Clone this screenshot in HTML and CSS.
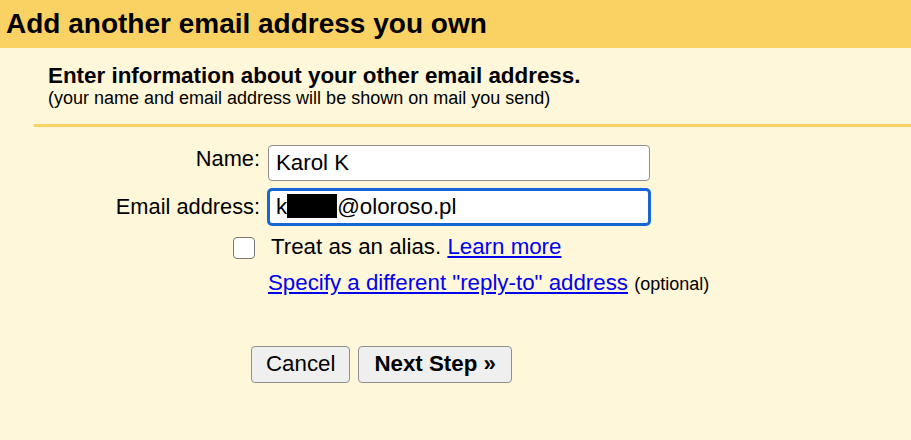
FILE: index.html
```html
<!DOCTYPE html>
<html lang="en">
<head>
<meta charset="utf-8">
<title>Add another email address you own</title>
<link rel="stylesheet" href="styles.css">
</head>
<body>
<div class="header">
  <h1 class="title">Add another email address you own</h1>
</div>
<div class="content">
  <div class="intro">
    <div class="lead">Enter information about your other email address.</div>
    <div class="note">(your name and email address will be shown on mail you send)</div>
  </div>
  <div class="rule"></div>
  <div class="form">
    <div class="label">Name:</div>
    <div class="input">Karol K</div>
    <div class="label label-second">Email address:</div>
    <div class="input focused">k<span class="redact"></span>@oloroso.pl</div>
    <div class="check-cell"><span class="checkbox"></span></div>
    <div class="alias">Treat as an alias. <a href="#">Learn more</a></div>
    <div class="reply"><a href="#">Specify a different "reply-to" address</a> <span class="optional">(optional)</span></div>
  </div>
  <div class="actions">
    <button class="btn btn-cancel" type="button">Cancel</button>
    <button class="btn btn-next" type="button">Next Step »</button>
  </div>
</div>
</body>
</html>
```

FILE: styles.css
```css
html, body {
  margin: 0;
  padding: 0;
}

body {
  background: #fff7d9;
  font-family: "Liberation Sans", Arial, sans-serif;
  color: #000;
  height: 440px;
  overflow: hidden;
}

.header {
  background: #fad264;
  height: 48px;
}

.title {
  margin: 0;
  font-size: 28px;
  font-weight: bold;
  line-height: 48px;
  padding-left: 6px;
  white-space: nowrap;
}

.intro {
  padding: 16px 0 0 48px;
}

.lead {
  font-size: 22.4px;
  font-weight: bold;
  line-height: 24px;
  white-space: nowrap;
}

.note {
  font-size: 18px;
  line-height: 20px;
  white-space: nowrap;
}

.rule {
  margin: 16px 0 0 34px;
  height: 3px;
  background: #fad264;
}

.form {
  display: grid;
  grid-template-columns: 260px 382px;
  column-gap: 8px;
  row-gap: 8px;
  margin-top: 18px;
}

.label {
  font-size: 21.8px;
  line-height: 24px;
  text-align: right;
  padding-top: 2px;
  white-space: nowrap;
}

.label-second {
  padding-top: 6px;
}

.input {
  box-sizing: border-box;
  height: 36px;
  border: 1px solid #8e8e8e;
  border-radius: 4px;
  background: #fff;
  font-size: 22.3px;
  line-height: 34px;
  padding-left: 7px;
  white-space: nowrap;
}

.input.focused {
  border: 2px solid #1766d6;
  box-shadow: 0 0 0 1px #1766d6;
  line-height: 32px;
  padding-left: 6px;
}

.redact {
  display: inline-block;
  width: 50px;
  height: 24px;
  background: #000;
  vertical-align: -4px;
}

.check-cell {
  display: flex;
  justify-content: flex-end;
  align-items: flex-end;
  padding-right: 5px;
  height: 26px;
}

.checkbox {
  display: block;
  box-sizing: border-box;
  width: 22px;
  height: 22px;
  border: 1.5px solid #777;
  border-radius: 4px;
  background: #fff;
}

.alias {
  font-size: 22.3px;
  line-height: 27px;
  padding-left: 3px;
  white-space: nowrap;
}

.reply {
  grid-column: 2;
  font-size: 22.3px;
  line-height: 30px;
  white-space: nowrap;
}

.optional {
  font-size: 18px;
}

a {
  color: #0000ee;
  text-decoration: underline;
}

.actions {
  display: flex;
  gap: 8px;
  margin: 47px 0 0 251px;
}

.btn {
  box-sizing: border-box;
  height: 37px;
  border: 1px solid #8f8f8f;
  border-radius: 4px;
  background: #efefef;
  font-family: "Liberation Sans", Arial, sans-serif;
  font-size: 22.3px;
  color: #000;
  padding: 0 14px 1px;
  margin: 0;
}

.btn-next {
  font-weight: bold;
  padding: 0 15px 1px;
}
```
